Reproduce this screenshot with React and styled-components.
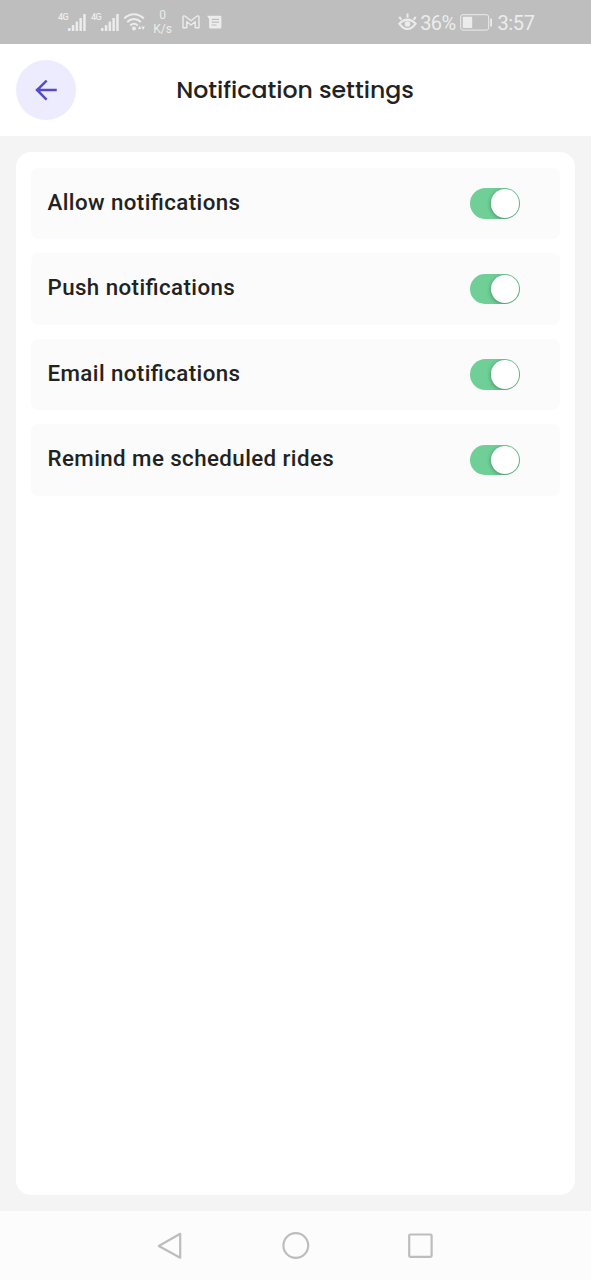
import React, { useState } from "react";
import styled, { createGlobalStyle } from "styled-components";

const GlobalStyle = createGlobalStyle`
  *, *::before, *::after { box-sizing: border-box; }
  body { margin: 0; font-family: Roboto, "Liberation Sans", sans-serif; }
`;

const Screen = styled.div`
  width: 591px;
  height: 1280px;
  display: flex;
  flex-direction: column;
  background: #f4f4f4;
  overflow: hidden;
`;

const StatusBar = styled.div`
  height: 44px;
  flex: none;
  display: flex;
  align-items: center;
  justify-content: space-between;
  padding: 0 56.5px 0 58px;
  background: #bebebe;
  color: #ececec;
`;

const StatusGroup = styled.div`
  display: flex;
  align-items: center;
  height: 44px;
  svg { display: block; flex: none; }
`;

const Signal = styled.div`
  display: flex;
  align-items: flex-start;
  width: 33px;
  height: 18px;
`;

const NetworkLabel = styled.span`
  width: 10px;
  font-size: 9px;
  line-height: 9px;
  font-weight: 500;
  letter-spacing: -0.6px;
`;

const Speed = styled.div`
  width: 20px;
  margin: 0 9px 0 6.5px;
  text-align: center;
  font-size: 12px;
  line-height: 14px;
`;

const MessageSlot = styled.span`
  margin-left: 7px;
`;

const BatterySlot = styled.span`
  margin-left: 4px;
`;

const StatusText = styled.span`
  font-size: 20px;
  line-height: 24px;
  letter-spacing: ${(p) => p.$spacing || "0"};
  margin-left: ${(p) => p.$gap};
  padding-top: 1px;
`;

const Header = styled.header`
  height: 92px;
  flex: none;
  display: grid;
  grid-template-columns: 60px 1fr 60px;
  align-items: center;
  padding: 0 16px;
  background: #ffffff;
`;

const BackButton = styled.button`
  width: 60px;
  height: 60px;
  border: 0;
  padding: 0;
  border-radius: 50%;
  background: #edecfe;
  display: flex;
  align-items: center;
  justify-content: center;
`;

const Title = styled.h1`
  margin: 0;
  padding-right: 1px;
  text-align: center;
  white-space: nowrap;
  font-family: Poppins, Inter, sans-serif;
  font-size: 23.6px;
  line-height: 32px;
  font-weight: 500;
  color: #222222;
`;

const Content = styled.main`
  flex: 1;
  display: flex;
  padding: 16px;
`;

const Card = styled.section`
  flex: 1;
  display: flex;
  flex-direction: column;
  gap: 14px;
  padding: 15.5px 15px;
  border-radius: 15px;
  background: #ffffff;
`;

const Row = styled.div`
  height: 71.5px;
  display: flex;
  align-items: center;
  justify-content: space-between;
  padding: 0 40px 0 16.5px;
  border-radius: 7px;
  background: #fbfbfb;
`;

const Label = styled.span`
  font-size: 22.3px;
  line-height: 28px;
  font-weight: 500;
  letter-spacing: 0.42px;
  font-feature-settings: "liga" 1;
  color: #222222;
  padding-bottom: 3px;
`;

const Toggle = styled.button`
  width: 50px;
  height: 30.5px;
  border: 0;
  padding: 1px;
  border-radius: 16px;
  display: flex;
  justify-content: ${(p) => (p.$on ? "flex-end" : "flex-start")};
  background: ${(p) => (p.$on ? "#6fcf97" : "#d4d4d4")};
  overflow: hidden;
`;

const Knob = styled.span`
  width: 28.5px;
  height: 28.5px;
  border-radius: 50%;
  background: #ffffff;
  box-shadow: 0 1px 4px rgba(0, 0, 0, 0.35);
`;

const NavBar = styled.nav`
  height: 69px;
  flex: none;
  display: flex;
  justify-content: center;
  gap: 97px;
  padding: 20px 0 0;
  background: #fcfcfc;
  svg { display: block; }
`;

const SignalIcon = () => (
  <svg width="20" height="18" viewBox="0 0 20 18" fill="currentColor">
    <rect x="0" y="15" width="2.5" height="3" rx=".6" />
    <rect x="3.8" y="12" width="2.5" height="6" rx=".6" />
    <rect x="7.6" y="8.5" width="2.5" height="9.5" rx=".6" />
    <rect x="11.4" y="5" width="2.5" height="13" rx=".6" />
    <rect x="15.2" y="1" width="2.5" height="17" rx=".6" />
  </svg>
);

const WifiIcon = () => (
  <svg width="22" height="18" viewBox="0 0 22 18" fill="none" stroke="currentColor" strokeWidth="2">
    <path d="M.2 5.5C6-.2 14-.2 19.8 5.5M3.2 9c4.1-4 9.5-4 13.6 0M6.3 12.4c2.4-2.2 5-2.2 7.4 0" />
    <circle cx="10" cy="15.5" r="2" fill="currentColor" stroke="none" />
    <path d="m14 16 1.7-3.2 1.7 3.2zM17.4 13.6h3.4L19.1 17z" fill="currentColor" stroke="none" />
  </svg>
);

const MailIcon = () => (
  <svg width="18" height="14" viewBox="0 0 18 14" fill="none" stroke="currentColor" strokeWidth="1.4" strokeLinejoin="round">
    <path d="M1 12.8V2.2C1 .8 2.3.6 3.2 1.3L9 5.8l5.8-4.5c.9-.7 2.2-.5 2.2.9v10.6h-3.8V6.7L9 10 4.8 6.7v6.1z" />
  </svg>
);

const MessageIcon = () => (
  <svg width="16" height="14" viewBox="0 0 16 14">
    <path d="M0 .7h13.2c.8 0 1.2.4 1.2 1.2v10.4c0 .8-.4 1.2-1.2 1.2H3.3c-.8 0-1.2-.4-1.2-1.2V4z" fill="currentColor" />
    <path d="M4.6 4.4h7.4M4.6 7.2H12M4.6 10h5" stroke="#bebebe" strokeWidth="1.2" />
  </svg>
);

const EyeIcon = () => (
  <svg width="19" height="18" viewBox="0 0 19 18" fill="none" stroke="currentColor" strokeWidth="2">
    <path d="M1.3 10.6Q9.5 2.6 17.7 10.6 9.5 21.6 1.3 10.6z" />
    <path d="m1.2 4 2.2 2.7M9.5.6v4M17.8 4l-2.2 2.7" />
    <circle cx="9.5" cy="11" r="2.8" fill="currentColor" stroke="none" />
  </svg>
);

const BatteryIcon = () => (
  <svg width="34" height="17" viewBox="0 0 34 17" fill="currentColor">
    <rect x=".7" y=".7" width="28" height="15.4" rx="2.3" fill="none" stroke="currentColor" strokeWidth="1" />
    <rect x="2.8" y="2.8" width="9.4" height="11.2" rx=".6" />
    <rect x="30.2" y="4.5" width="1.8" height="8" rx=".6" />
  </svg>
);

const BackArrow = () => (
  <svg width="24" height="24" viewBox="0 0 24 24" fill="none" stroke="#554bc8" strokeWidth="2.5" strokeLinecap="square" strokeLinejoin="miter">
    <path d="M11.8 3.4 3.1 12l8.7 8.8M3.1 12h18.4" />
  </svg>
);

const NAV_SHAPES = [
  <path key="back" d="M23.2 2.8V26.7L1.8 15z" />,
  <circle key="home" cx="13.8" cy="14.5" r="12.4" />,
  <rect key="recent" x="2.2" y="3.5" width="22.4" height="22.3" rx="1" />,
];

const OPTIONS = [
  "Allow notifications",
  "Push notifications",
  "Email notifications",
  "Remind me scheduled rides",
];

function Option({ label }) {
  const [on, setOn] = useState(true);
  return (
    <Row>
      <Label>{label}</Label>
      <Toggle $on={on} role="switch" aria-checked={on} aria-label={label} onClick={() => setOn(!on)}>
        <Knob />
      </Toggle>
    </Row>
  );
}

export default function App() {
  return (
    <Screen>
      <GlobalStyle />
      <StatusBar>
        <StatusGroup>
          <Signal><NetworkLabel>4G</NetworkLabel><SignalIcon /></Signal>
          <Signal><NetworkLabel>4G</NetworkLabel><SignalIcon /></Signal>
          <WifiIcon />
          <Speed>0<br />K/s</Speed>
          <MailIcon />
          <MessageSlot><MessageIcon /></MessageSlot>
        </StatusGroup>
        <StatusGroup>
          <EyeIcon />
          <StatusText $gap="3px" $spacing="-0.6px">36%</StatusText>
          <BatterySlot><BatteryIcon /></BatterySlot>
          <StatusText $gap="4px" $spacing="-0.4px">3:57</StatusText>
        </StatusGroup>
      </StatusBar>
      <Header>
        <BackButton aria-label="Back"><BackArrow /></BackButton>
        <Title>Notification settings</Title>
      </Header>
      <Content>
        <Card>
          {OPTIONS.map((label) => <Option key={label} label={label} />)}
        </Card>
      </Content>
      <NavBar>
        {NAV_SHAPES.map((shape) => (
          <svg key={shape.key} width="28" height="30" viewBox="0 0 28 30" fill="none" stroke="#bdbdbd" strokeWidth="2.2" strokeLinejoin="round">{shape}</svg>
        ))}
      </NavBar>
    </Screen>
  );
}
